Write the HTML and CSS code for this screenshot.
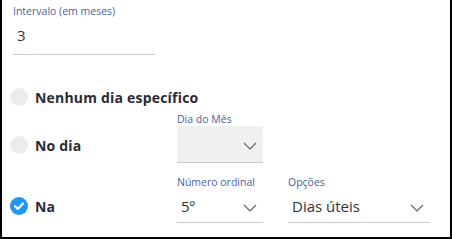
FILE: index.html
```html
<!doctype html>
<html lang="pt-BR">
<head>
  <meta charset="UTF-8"/>
  <title>Intervalo</title>
  <link rel="stylesheet" href="styles.css">
</head>
<body>
  <div class="panel">
    <div class="field interval">
      <label class="field-label">Intervalo (em meses)</label>
      <div class="field-value">3</div>
    </div>

    <div class="option-row first">
      <div class="radio">
        <span class="radio-dot"></span>
        <span class="radio-text">Nenhum dia específico</span>
      </div>
    </div>

    <div class="option-row second">
      <div class="radio tall">
        <span class="radio-dot"></span>
        <span class="radio-text">No dia</span>
      </div>
      <div class="field select small">
        <label class="field-label">Dia do Mês</label>
        <div class="field-value filled">
          <span></span>
          <svg class="chevron" width="14" height="8" viewBox="0 0 14 8"><path d="M1 1l6 6 6-6" fill="none" stroke="#666" stroke-width="1.2"/></svg>
        </div>
      </div>
    </div>

    <div class="option-row">
      <div class="radio">
        <span class="radio-dot checked">
          <svg width="18" height="18" viewBox="0 0 18 18"><path d="M5 9.2l2.8 2.7 5.2-5.4" fill="none" stroke="#fff" stroke-width="2.2" stroke-linecap="round" stroke-linejoin="round"/></svg>
        </span>
        <span class="radio-text">Na</span>
      </div>
      <div class="field select small">
        <label class="field-label">Número ordinal</label>
        <div class="field-value">
          <span>5º</span>
          <svg class="chevron" width="14" height="8" viewBox="0 0 14 8"><path d="M1 1l6 6 6-6" fill="none" stroke="#666" stroke-width="1.2"/></svg>
        </div>
      </div>
      <div class="field select wide">
        <label class="field-label">Opções</label>
        <div class="field-value">
          <span>Dias úteis</span>
          <svg class="chevron" width="14" height="8" viewBox="0 0 14 8"><path d="M1 1l6 6 6-6" fill="none" stroke="#666" stroke-width="1.2"/></svg>
        </div>
      </div>
    </div>
  </div>
</body>
</html>
```

FILE: styles.css
```css
body {
  margin: 0;
  background: #fff;
  font-family: 'Open Sans', 'Noto Sans', sans-serif;
  color: #333;
}

.panel {
  width: 452px;
  height: 239px;
  box-sizing: border-box;
  border: 2px solid #000;
  border-top: none;
  padding: 4px 0 0 8px;
}

.field {
  display: flex;
  flex-direction: column;
}

.field-label {
  font-size: 10.5px;
  line-height: 14px;
  color: #4a62a0;
  white-space: nowrap;
}

.field-value {
  display: flex;
  align-items: center;
  justify-content: space-between;
  height: 33px;
  border-bottom: 1px solid #c9c9c9;
  font-size: 15px;
  color: #333;
  padding: 0 6px 0 4px;
}

.interval {
  width: 142px;
  margin-left: 3px;
}

.interval .field-value {
  height: 34px;
  padding-bottom: 2px;
}

.field-value.filled {
  background: #f0f0f0;
  height: 36px;
}

.chevron {
  margin-top: 4px;
}

.option-row {
  display: flex;
  align-items: flex-end;
  margin-top: 12px;
}

.option-row.first {
  margin-top: 32px;
}

.option-row.second {
  margin-top: 5px;
}

.radio {
  width: 167px;
  flex-shrink: 0;
  display: flex;
  align-items: center;
  gap: 7px;
  height: 34px;
  white-space: nowrap;
}

.radio.tall {
  height: 36px;
}

.option-row.first .radio {
  height: 20px;
}

.radio-dot {
  flex-shrink: 0;
  width: 18px;
  height: 18px;
  border-radius: 50%;
  background: #ececec;
  display: flex;
}

.radio-dot.checked {
  background: #2196f3;
}

.radio-text {
  font-size: 14px;
  font-weight: 700;
  color: #2a2a35;
  letter-spacing: 0.2px;
}

.small {
  width: 86px;
}

.wide {
  width: 142px;
  margin-left: 25px;
}
```
